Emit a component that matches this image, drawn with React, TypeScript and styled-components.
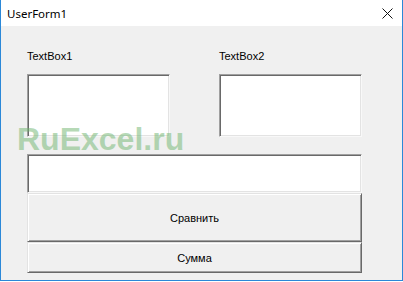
import React from 'react';
import styled, { createGlobalStyle } from 'styled-components';

const GlobalStyle = createGlobalStyle`
  html, body {
    margin: 0;
    padding: 0;
    background: #ffffff;
  }
  body {
    width: 403px;
    height: 282px;
    overflow: hidden;
  }
`;

const Window = styled.div`
  box-sizing: border-box;
  width: 403px;
  height: 281px;
  display: flex;
  flex-direction: column;
  border: 1px solid #2b88d8;
  border-top: none;
  background: #f0f0f0;
`;

const TitleBar = styled.div`
  height: 26px;
  flex: none;
  display: flex;
  align-items: center;
  justify-content: space-between;
  background: #ffffff;
  padding: 0 9px 0 6px;
`;

const Title = styled.span`
  font-family: 'Noto Sans', 'Open Sans', sans-serif;
  font-size: 11.5px;
  color: #000;
  margin-top: 1px;
`;

const CloseIcon = () => (
  <svg width="11" height="11" viewBox="0 0 11 11">
    <path d="M0.5 0.5 L10.5 10.5 M10.5 0.5 L0.5 10.5" stroke="#111" strokeWidth="1" />
  </svg>
);

const Body = styled.div`
  position: relative;
  flex: 1;
  display: grid;
  grid-template-columns: 143px 143px;
  column-gap: 49px;
  grid-auto-rows: auto;
  align-content: start;
  padding: 24px 39px 0 26px;
  font-family: 'Liberation Sans', Arial, sans-serif;
  font-size: 11px;
  color: #000;
`;

const Label = styled.div`
  line-height: 13px;
  margin-bottom: 11px;
`;

const TextBox = styled.div<{ $wide?: boolean }>`
  box-sizing: border-box;
  background: #ffffff;
  border-top: 1px solid #a0a0a0;
  border-left: 1px solid #a0a0a0;
  border-right: 1px solid #f8f8f8;
  border-bottom: 1px solid #f8f8f8;
  box-shadow: inset 1px 1px 0 #696969, inset -1px -1px 0 #e3e3e3;
  grid-column: ${({ $wide }) => ($wide ? '1 / span 2' : 'auto')};
  margin-top: ${({ $wide }) => ($wide ? '17px' : '0')};
  height: ${({ $wide }) => ($wide ? '39px' : '63px')};
`;

const Button = styled.div<{ $height: number }>`
  box-sizing: border-box;
  grid-column: 1 / span 2;
  height: ${({ $height }) => $height}px;
  display: flex;
  align-items: center;
  justify-content: center;
  background: #f0f0f0;
  border-top: 1px solid #e3e3e3;
  border-left: 1px solid #e3e3e3;
  border-right: 1px solid #696969;
  border-bottom: 1px solid #696969;
  box-shadow: inset 1px 1px 0 #ffffff, inset -1px -1px 0 #a0a0a0;
  padding-top: 1px;
`;

const Watermark = styled.div`
  position: absolute;
  left: 16px;
  top: 95px;
  font-family: 'Liberation Sans', Arial, sans-serif;
  font-weight: bold;
  font-size: 32px;
  line-height: 36px;
  color: rgba(110, 180, 110, 0.5);
  pointer-events: none;
`;

export default function App() {
  return (
    <>
      <GlobalStyle />
      <Window>
        <TitleBar>
          <Title>UserForm1</Title>
          <CloseIcon />
        </TitleBar>
        <Body>
          <Label>TextBox1</Label>
          <Label>TextBox2</Label>
          <TextBox />
          <TextBox />
          <TextBox $wide />
          <Button $height={49}>Сравнить</Button>
          <Button $height={31}>Сумма</Button>
          <Watermark>RuExcel.ru</Watermark>
        </Body>
      </Window>
    </>
  );
}
